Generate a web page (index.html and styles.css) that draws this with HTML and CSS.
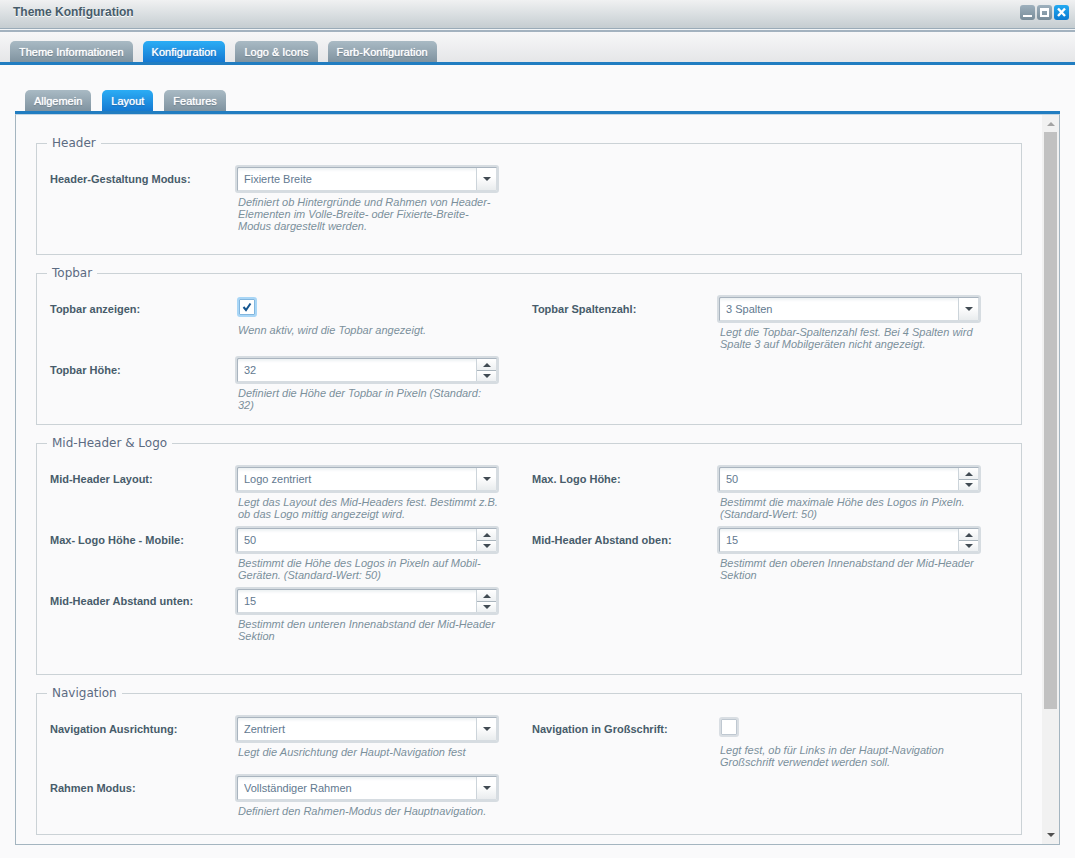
FILE: index.html
```html
<!DOCTYPE html>
<html lang="de">
<head>
<meta charset="utf-8">
<title>Theme Konfiguration</title>
<link rel="stylesheet" href="styles.css">
</head>
<body>
<header class="titlebar">
  <h1 class="titlebar-text">Theme Konfiguration</h1>
  <div class="tools">
    <button class="tool" type="button" aria-label="Minimieren"><svg width="15" height="15" viewBox="0 0 15 15"><path d="M3 11h9" stroke="#fff" stroke-width="2"/></svg></button>
    <button class="tool" type="button" aria-label="Maximieren"><svg width="15" height="15" viewBox="0 0 15 15"><path d="M3 3h9v9H3zM5 6v4h5V6z" fill="#fff" fill-rule="evenodd"/></svg></button>
    <button class="tool tool-close" type="button" aria-label="Schließen"><svg width="15" height="15" viewBox="0 0 15 15"><path d="M4 3.500l7 7.500M11 3.500l-7 7.500" stroke="#fff" stroke-width="2.400"/></svg></button>
  </div>
</header>
<nav class="tabs tabs-main">
  <button class="tab" type="button">Theme Informationen</button>
  <button class="tab active" type="button">Konfiguration</button>
  <button class="tab" type="button">Logo &amp; Icons</button>
  <button class="tab" type="button">Farb-Konfiguration</button>
</nav>
<main class="content">
  <nav class="tabs tabs-sub">
    <button class="tab" type="button">Allgemein</button>
    <button class="tab active" type="button">Layout</button>
    <button class="tab" type="button">Features</button>
  </nav>
  <div class="panel">
    <form class="form">
      <fieldset class="group group-header">
        <legend>Header</legend>
        <div class="rows">
          <div class="row">
            <label for="mode">Header-Gestaltung Modus:</label>
            <div class="field">
              <div class="control">
                <select id="mode"><option>Fixierte Breite</option></select>
                <span class="trigger"><svg width="8" height="4" viewBox="0 0 8 4"><path d="M0 0h8L4 4z"/></svg></span>
              </div>
              <p class="help">Definiert ob Hintergründe und Rahmen von Header-Elementen im Volle-Breite- oder Fixierte-Breite-Modus dargestellt werden.</p>
            </div>
          </div>
        </div>
      </fieldset>

      <fieldset class="group group-topbar">
        <legend>Topbar</legend>
        <div class="rows">
          <div class="row">
            <label for="show">Topbar anzeigen:</label>
            <div class="field">
              <span class="check"><input id="show" type="checkbox" checked><svg width="10" height="10" viewBox="0 0 10 10"><path d="M1.500 5l2.500 3L8.500 1.500" fill="none" stroke="#14558f" stroke-width="2"/></svg></span>
              <p class="help">Wenn aktiv, wird die Topbar angezeigt.</p>
            </div>
          </div>
          <div class="row">
            <label for="cols">Topbar Spaltenzahl:</label>
            <div class="field">
              <div class="control">
                <select id="cols"><option>3 Spalten</option></select>
                <span class="trigger"><svg width="8" height="4" viewBox="0 0 8 4"><path d="M0 0h8L4 4z"/></svg></span>
              </div>
              <p class="help">Legt die Topbar-Spaltenzahl fest. Bei 4 Spalten wird Spalte 3 auf Mobilgeräten nicht angezeigt.</p>
            </div>
          </div>
          <div class="row">
            <label for="height">Topbar Höhe:</label>
            <div class="field">
              <div class="control">
                <input id="height" type="text" value="32">
                <span class="spin"><button type="button" aria-label="Erhöhen"><svg width="8" height="4" viewBox="0 0 8 4"><path d="M0 4h8L4 0z"/></svg></button><button type="button" aria-label="Verringern"><svg width="8" height="4" viewBox="0 0 8 4"><path d="M0 0h8L4 4z"/></svg></button></span>
              </div>
              <p class="help">Definiert die Höhe der Topbar in Pixeln (Standard: 32)</p>
            </div>
          </div>
        </div>
      </fieldset>

      <fieldset class="group group-mid">
        <legend>Mid-Header &amp; Logo</legend>
        <div class="rows">
          <div class="row">
            <label for="midlayout">Mid-Header Layout:</label>
            <div class="field">
              <div class="control">
                <select id="midlayout"><option>Logo zentriert</option></select>
                <span class="trigger"><svg width="8" height="4" viewBox="0 0 8 4"><path d="M0 0h8L4 4z"/></svg></span>
              </div>
              <p class="help">Legt das Layout des Mid-Headers fest. Bestimmt z.B. ob das Logo mittig angezeigt wird.</p>
            </div>
          </div>
          <div class="row">
            <label for="logomax">Max. Logo Höhe:</label>
            <div class="field">
              <div class="control">
                <input id="logomax" type="text" value="50">
                <span class="spin"><button type="button" aria-label="Erhöhen"><svg width="8" height="4" viewBox="0 0 8 4"><path d="M0 4h8L4 0z"/></svg></button><button type="button" aria-label="Verringern"><svg width="8" height="4" viewBox="0 0 8 4"><path d="M0 0h8L4 4z"/></svg></button></span>
              </div>
              <p class="help">Bestimmt die maximale Höhe des Logos in Pixeln. (Standard-Wert: 50)</p>
            </div>
          </div>
          <div class="row">
            <label for="logomobile">Max- Logo Höhe - Mobile:</label>
            <div class="field">
              <div class="control">
                <input id="logomobile" type="text" value="50">
                <span class="spin"><button type="button" aria-label="Erhöhen"><svg width="8" height="4" viewBox="0 0 8 4"><path d="M0 4h8L4 0z"/></svg></button><button type="button" aria-label="Verringern"><svg width="8" height="4" viewBox="0 0 8 4"><path d="M0 0h8L4 4z"/></svg></button></span>
              </div>
              <p class="help">Bestimmt die Höhe des Logos in Pixeln auf Mobil-Geräten. (Standard-Wert: 50)</p>
            </div>
          </div>
          <div class="row">
            <label for="padtop">Mid-Header Abstand oben:</label>
            <div class="field">
              <div class="control">
                <input id="padtop" type="text" value="15">
                <span class="spin"><button type="button" aria-label="Erhöhen"><svg width="8" height="4" viewBox="0 0 8 4"><path d="M0 4h8L4 0z"/></svg></button><button type="button" aria-label="Verringern"><svg width="8" height="4" viewBox="0 0 8 4"><path d="M0 0h8L4 4z"/></svg></button></span>
              </div>
              <p class="help">Bestimmt den oberen Innenabstand der Mid-Header Sektion</p>
            </div>
          </div>
          <div class="row">
            <label for="padbottom">Mid-Header Abstand unten:</label>
            <div class="field">
              <div class="control">
                <input id="padbottom" type="text" value="15">
                <span class="spin"><button type="button" aria-label="Erhöhen"><svg width="8" height="4" viewBox="0 0 8 4"><path d="M0 4h8L4 0z"/></svg></button><button type="button" aria-label="Verringern"><svg width="8" height="4" viewBox="0 0 8 4"><path d="M0 0h8L4 4z"/></svg></button></span>
              </div>
              <p class="help">Bestimmt den unteren Innenabstand der Mid-Header Sektion</p>
            </div>
          </div>
        </div>
      </fieldset>

      <fieldset class="group group-nav">
        <legend>Navigation</legend>
        <div class="rows">
          <div class="row">
            <label for="align">Navigation Ausrichtung:</label>
            <div class="field">
              <div class="control">
                <select id="align"><option>Zentriert</option></select>
                <span class="trigger"><svg width="8" height="4" viewBox="0 0 8 4"><path d="M0 0h8L4 4z"/></svg></span>
              </div>
              <p class="help">Legt die Ausrichtung der Haupt-Navigation fest</p>
            </div>
          </div>
          <div class="row">
            <label for="upper">Navigation in Großschrift:</label>
            <div class="field">
              <span class="check"><input id="upper" type="checkbox"></span>
              <p class="help">Legt fest, ob für Links in der Haupt-Navigation Großschrift verwendet werden soll.</p>
            </div>
          </div>
          <div class="row">
            <label for="frame">Rahmen Modus:</label>
            <div class="field">
              <div class="control">
                <select id="frame"><option>Vollständiger Rahmen</option></select>
                <span class="trigger"><svg width="8" height="4" viewBox="0 0 8 4"><path d="M0 0h8L4 4z"/></svg></span>
              </div>
              <p class="help">Definiert den Rahmen-Modus der Hauptnavigation.</p>
            </div>
          </div>
        </div>
      </fieldset>
    </form>
    <div class="scrollbar" aria-hidden="true">
      <svg class="scroll-up" width="8" height="4" viewBox="0 0 8 4"><path d="M0 4h8L4 0z"/></svg>
      <div class="scroll-track"><div class="scroll-thumb"></div></div>
      <svg class="scroll-down" width="8" height="4" viewBox="0 0 8 4"><path d="M0 0h8L4 4z"/></svg>
    </div>
  </div>
</main>
</body>
</html>
```

FILE: styles.css
```css
* {
  box-sizing: border-box;
}

body {
  margin: 0;
  background: #fafafb;
  color: #475c6a;
  font: 11px/13px "Liberation Sans", Arial, sans-serif;
}

button,
input,
select {
  margin: 0;
  font: inherit;
}

svg {
  display: block;
}

/* Window title */
.titlebar {
  display: flex;
  justify-content: space-between;
  align-items: flex-start;
  height: 32px;
  padding: 5px 6px 0 13px;
  background: linear-gradient(#f0f1f2, #c5cdd1 28px, #9aabb8 28px, #9aabb8 29px, #f2f5f7 29px, #f2f5f7 30px, #a3b2bf 30px);
}

.titlebar-text {
  margin: 0;
  color: #475c6a;
  font-size: 12px;
  line-height: 14px;
  text-shadow: 0 1px 0 #fff;
}

.tools {
  display: flex;
  gap: 2px;
}

.tool {
  width: 15px;
  height: 15px;
  padding: 0;
  border: 0;
  border-radius: 3px;
  background: linear-gradient(#9db0bd, #788c99);
}

.tool-close {
  background: linear-gradient(#23aaf2, #0b7ad0);
}

/* Tabs */
.tabs {
  display: flex;
  align-items: flex-end;
  gap: 10px;
  border-bottom: 3px solid #217dc1;
}

.tabs-main {
  height: 33px;
  padding: 0 10px;
  background: linear-gradient(#f7f7f8, #e5e6e8);
}

.tabs-sub {
  gap: 11px;
  padding: 0 10px;
}

.tab {
  height: 21px;
  padding: 2px 9px 0;
  border: 0;
  border-radius: 5px 5px 0 0;
  background: linear-gradient(#a9bac4, #8093a0);
  color: #fff;
  text-shadow: 0 0 1px #fff, 0 1px 1px #5c6f7c;
}

.tab.active {
  background: linear-gradient(#2badf5, #1579d2);
  text-shadow: 0 0 1px #fff, 0 1px 1px #0b57a4;
}

/* Scrolling panel */
.content {
  padding: 25px 15px 13px;
}

.panel {
  display: flex;
  border: 1px solid #a4b5c0;
  border-top-color: #c3d5e3;
}

.form {
  flex: 1;
  padding: 21px 20px 9px;
}

.group {
  min-width: 0;
  margin: 0 0 11px;
  padding: 15px 13px 0;
  border: 1px solid #cbd2d6;
}

.group legend {
  margin-left: -3px;
  padding: 0 5px;
  color: #5c6b82;
  font: 12px/14px "DejaVu Sans", Verdana, sans-serif;
}

.group-header {
  padding-bottom: 16px;
}

.group-topbar {
  padding-bottom: 7px;
}

.group-mid {
  padding-bottom: 26px;
}

.group-nav {
  margin-bottom: 0;
  padding-bottom: 11px;
}

.rows {
  display: grid;
  grid-template-columns: 1fr 1fr;
  column-gap: 6px;
}

.row {
  display: flex;
}

.row label {
  flex: 0 0 185px;
  padding-top: 8px;
  font-weight: bold;
}

.field {
  flex: 0 1 264px;
  padding-bottom: 6px;
}

/* Select and number fields */
.control {
  display: grid;
  grid-template-columns: 1fr 21px;
  height: 28px;
  border: 2px solid #d6dce1;
  border-radius: 3px;
  background: #fff;
  box-shadow: inset 1px 1px 0 #a9b4bf, inset -1px -1px 0 #d6dce1, inset 0 3px 3px #edf1f3;
}

.control select,
.control input {
  grid-area: 1 / 1 / 2 / 3;
  min-width: 0;
  padding: 0 24px 0 7px;
  border: 0;
  outline: 0;
  background: transparent;
  color: #627990;
  appearance: none;
}

.trigger,
.spin {
  grid-area: 1 / 2;
  margin: 1px 1px 1px 0;
  border-left: 1px solid #ccd4da;
  fill: #414b53;
}

.trigger {
  display: grid;
  place-items: center;
  background: linear-gradient(#fff 40%, #e9ecee);
  pointer-events: none;
}

.spin {
  display: grid;
  grid-template-rows: 1fr 1fr;
}

.spin button {
  display: grid;
  place-items: center;
  min-height: 0;
  padding: 0;
  border: 0;
  background: linear-gradient(#fff, #edf0f2);
  fill: inherit;
}

.spin button + button {
  border-top: 1px solid #aab5bd;
}

.check {
  display: grid;
  width: 20px;
  height: 20px;
  margin: 2px 0 7px 2px;
}

.check input {
  grid-area: 1 / 1;
  width: 20px;
  height: 20px;
  border: 2px solid #d9dee3;
  border-radius: 3px;
  background: #fff;
  box-shadow: inset 0 0 0 1px #bfc8d1;
  appearance: none;
}

.check input:checked {
  border-color: #a9d6f6;
  box-shadow: inset 0 0 0 1px #82b6de;
}

.check svg {
  grid-area: 1 / 1;
  place-self: center;
  pointer-events: none;
}

.help {
  margin: 3px 0 0 3px;
  color: #7b909b;
  font-style: italic;
  line-height: 12px;
}

.check + .help {
  margin-top: 0;
}

/* Scrollbar */
.scrollbar {
  display: flex;
  flex: 0 0 17px;
  flex-direction: column;
  align-items: center;
  padding: 7px 0;
  background: #f1f1f1;
}

.scroll-up {
  fill: #a3a3a3;
}

.scroll-down {
  fill: #505050;
}

.scroll-track {
  flex: 1;
  width: 13px;
  margin: 6px 0;
}

.scroll-thumb {
  height: 83%;
  background: #c1c1c1;
}
```
